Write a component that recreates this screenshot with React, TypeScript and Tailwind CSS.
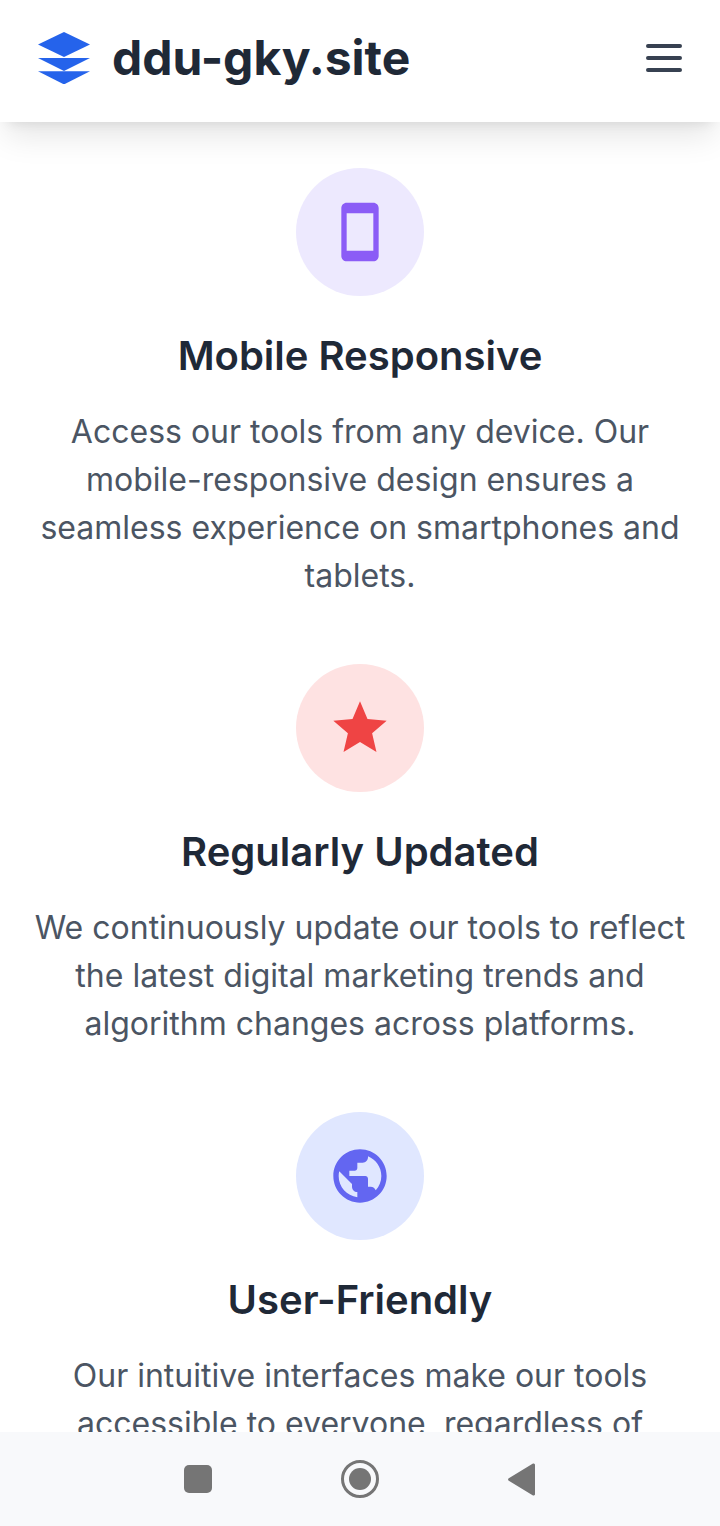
import type { FC, ReactNode } from "react";

interface Feature {
  title: string;
  text: string;
  circle: string;
  icon: ReactNode;
}

const features: Feature[] = [
  {
    title: "Mobile Responsive",
    text: "Access our tools from any device. Our mobile-responsive design ensures a seamless experience on smartphones and tablets.",
    circle: "bg-[#ede9fe]",
    icon: (
      <svg viewBox="0 0 24 24" className="w-16 h-16 fill-[#8b5cf6]">
        <path d="M17 1.01L7 1c-1.1 0-2 .9-2 2v18c0 1.1.9 2 2 2h10c1.1 0 2-.9 2-2V3c0-1.1-.9-1.99-2-1.99zM17 19H7V5h10v14z" />
      </svg>
    ),
  },
  {
    title: "Regularly Updated",
    text: "We continuously update our tools to reflect the latest digital marketing trends and algorithm changes across platforms.",
    circle: "bg-[#fee2e2]",
    icon: (
      <svg viewBox="0 0 24 24" className="w-16 h-16 fill-[#ef4444]">
        <path d="M12 17.27L18.18 21l-1.64-7.03L22 9.24l-7.19-.61L12 2 9.19 8.63 2 9.24l5.46 4.73L5.82 21z" />
      </svg>
    ),
  },
  {
    title: "User-Friendly",
    text: "Our intuitive interfaces make our tools accessible to everyone, regardless of technical expertise.",
    circle: "bg-[#e0e7ff]",
    icon: (
      <svg viewBox="0 0 24 24" className="w-16 h-16 fill-[#6366f1]">
        <path d="M12 2C6.48 2 2 6.48 2 12s4.48 10 10 10 10-4.48 10-10S17.52 2 12 2zm-1 17.93c-3.95-.49-7-3.85-7-7.93 0-.62.08-1.21.21-1.79L9 15v1c0 1.1.9 2 2 2v1.93zm6.9-2.54c-.26-.81-1-1.39-1.9-1.39h-1v-3c0-.55-.45-1-1-1H8v-2h2c.55 0 1-.45 1-1V7h2c1.1 0 2-.9 2-2v-.41c2.93 1.19 5 4.06 5 7.41 0 2.08-.8 3.97-2.1 5.39z" />
      </svg>
    ),
  },
];

const Logo: FC = () => (
  <svg viewBox="0 0 52 52" className="w-[52px] h-[52px] fill-[#2563eb] shrink-0">
    <polygon points="26,0 52,12.5 26,25 0,12.5" />
    <polygon points="0,26 52,26 26,39" />
    <polygon points="0,39.2 52,39.2 26,52.4" />
  </svg>
);

const App: FC = () => {
  return (
    <div className="h-[1526px] w-[720px] flex flex-col overflow-hidden bg-white font-['Inter',sans-serif]">
      <header className="relative z-10 h-[122px] shrink-0 bg-white flex items-center justify-between pl-[38px] pr-[38px] pb-[6px] shadow-[0_20px_30px_-6px_rgba(0,0,0,0.1),0_8px_12px_-8px_rgba(0,0,0,0.1)]">
        <div className="flex items-center gap-[22px]">
          <Logo />
          <span className="text-[48px] leading-[64px] font-bold text-[#1f2937]">ddu-gky.site</span>
        </div>
        <svg viewBox="0 0 36 30" className="w-9 h-[30px] stroke-[#374151]" fill="none" strokeWidth="4" strokeLinecap="round">
          <path d="M2 3h32M2 15h32M2 27h32" />
        </svg>
      </header>

      <main className="flex-1 min-h-0 overflow-hidden px-8 pt-[46px] flex flex-col gap-16">
        {features.map((f) => (
          <section key={f.title} className="flex flex-col items-center text-center shrink-0">
            <div className={`w-32 h-32 rounded-full flex items-center justify-center mb-8 ${f.circle}`}>
              {f.icon}
            </div>
            <h3 className="text-[40px] leading-[56px] font-semibold text-[#1f2937] mb-6">{f.title}</h3>
            <p className="text-[32px] leading-[48px] text-[#4b5563]">{f.text}</p>
          </section>
        ))}
      </main>

      <nav className="h-[94px] shrink-0 bg-[#f8f9fb] flex items-center justify-center gap-[129px] pr-[2px]">
        <div className="w-[28px] h-[28px] rounded-[5px] bg-[#757575]" />
        <div className="w-[38px] h-[38px] rounded-full border-[3px] border-[#757575] flex items-center justify-center">
          <div className="w-[22px] h-[22px] rounded-full bg-[#757575]" />
        </div>
        <svg viewBox="0 0 27 33" className="w-[27px] h-[33px] fill-[#757575]">
          <path d="M25 .6 0.8 15.2a1.5 1.5 0 0 0 0 2.6L25 32.4a1.4 1.4 0 0 0 2-1.2V1.8A1.4 1.4 0 0 0 25 .6z" />
        </svg>
      </nav>
    </div>
  );
};

export default App;
